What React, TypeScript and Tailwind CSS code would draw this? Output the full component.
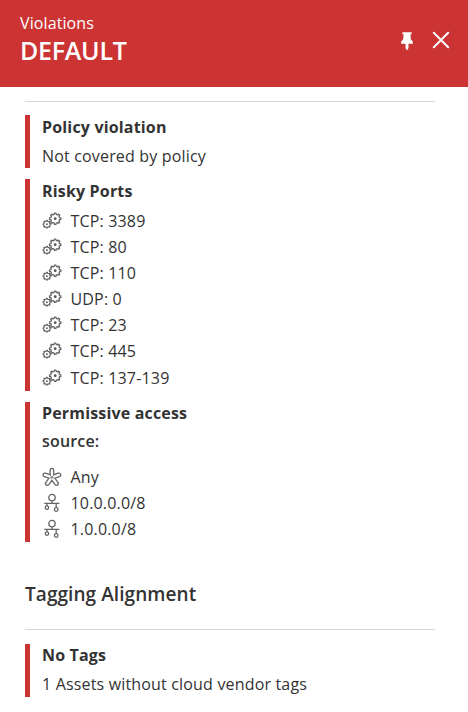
import type { ReactNode } from 'react';

function gearPath(cx: number, cy: number, outer: number, inner: number, teeth = 8) {
  const points: string[] = [];
  const step = (Math.PI * 2) / teeth;
  for (let i = 0; i < teeth; i++) {
    const a = i * step - Math.PI / 2;
    const corners: [number, number][] = [
      [inner, -0.3],
      [outer, -0.17],
      [outer, 0.17],
      [inner, 0.3],
    ];
    for (const [r, f] of corners) {
      points.push(`${(cx + r * Math.cos(a + f * step)).toFixed(2)} ${(cy + r * Math.sin(a + f * step)).toFixed(2)}`);
    }
  }
  return `M${points.join('L')}Z`;
}

function GearsIcon() {
  return (
    <svg viewBox="0 0 20 20" className="size-5 shrink-0" fill="none" stroke="#666" strokeWidth="1.3" strokeLinejoin="round">
      <path d={gearPath(13.2, 7.7, 5.7, 4.5)} />
      <circle cx="13.2" cy="7.7" r="1.4" fill="#555" stroke="none" />
      <path d={gearPath(4.9, 13.2, 3.9, 3)} strokeWidth="1.1" />
      <circle cx="4.9" cy="13.2" r="0.9" fill="#555" stroke="none" />
    </svg>
  );
}

function AnyIcon() {
  const arms = 'M9.9 10.3V3.2M9.9 10.3L2.9 7.9M9.9 10.3L16.9 7.9M9.9 10.3L5.3 16.5M9.9 10.3L14.5 16.5';
  return (
    <svg viewBox="0 0 20 20" className="size-5 shrink-0" strokeLinecap="round">
      <path d={arms} stroke="#666" strokeWidth="4.9" />
      <path d={arms} stroke="#fff" strokeWidth="2.3" />
      <path d="M9.9 10.3V12.4M9.9 10.3L11.6 8.2M9.9 10.3L8.2 8.2M9.9 10.3L7.6 11.1M9.9 10.3L12.2 11.1" stroke="#777" strokeWidth="0.8" />
    </svg>
  );
}

function NetworkIcon() {
  return (
    <svg viewBox="0 0 20 20" className="size-5 shrink-0" fill="none" stroke="#666" strokeWidth="1.3">
      <circle cx="10" cy="4.6" r="3.2" />
      <path d="M10 7.8V10.4M2.3 10.4H17.4M5 10.4V13M14.2 10.4V14.6" />
      <circle cx="5" cy="14.6" r="1.7" />
      <circle cx="14.2" cy="16.5" r="1.8" />
    </svg>
  );
}

function Row({ icon, children }: { icon: ReactNode; children: ReactNode }) {
  return (
    <li className="flex h-[26.08px] items-center gap-[8.5px]">
      {icon}
      <span>{children}</span>
    </li>
  );
}

function Section({ className, children }: { className: string; children: ReactNode }) {
  return <section className={`border-l-5 border-[#cc3333] pl-3 ${className}`}>{children}</section>;
}

const ports = ['TCP: 3389', 'TCP: 80', 'TCP: 110', 'UDP: 0', 'TCP: 23', 'TCP: 445', 'TCP: 137-139'];

export default function App() {
  return (
    <div className="h-[712px] w-[468px] overflow-hidden bg-white font-['Open_Sans','Noto_Sans',sans-serif] text-base leading-6 text-[#333]">
      <header className="flex h-[87px] items-start justify-between bg-[#cc3333] pr-[18px] pl-5 text-white">
        <div className="pt-3">
          <p className="leading-[22px] tracking-[0.1px]">Violations</p>
          <h1 className="text-[25px] leading-[33px] font-semibold tracking-[-0.25px]">DEFAULT</h1>
        </div>
        <div className="flex items-start gap-[18px] pt-[31px]">
          <button aria-label="Pin" className="pt-px">
            <svg viewBox="0 0 14 19" className="h-[19px] w-3.5" fill="#fff">
              <path d="M2.4 0.3H11.6V2.2H10.4L10.9 7.6C12.3 8.6 13 9.8 13 11.8H8.5V16L7 18.4L5.5 16V11.8H1C1 9.8 1.7 8.6 3.1 7.6L3.6 2.2H2.4Z" />
            </svg>
          </button>
          <button aria-label="Close">
            <svg viewBox="0 0 18 18" className="size-[18px]" stroke="#fff" strokeWidth="2" strokeLinecap="round">
              <path d="M1.8 1.8L16.2 16.2M16.2 1.8L1.8 16.2" />
            </svg>
          </button>
        </div>
      </header>
      <main className="pr-[33px] pl-[25px] tracking-[0.17px]">
        <hr className="mt-3.5 border-[#d8d8d8]" />
        <div className="flex flex-col gap-[11px] pt-[13px]">
          <Section className="h-[53px]">
            <h3 className="font-bold">Policy violation</h3>
            <p className="pt-[5px]">Not covered by policy</p>
          </Section>
          <Section className="h-[212px]">
            <h3 className="font-bold">Risky Ports</h3>
            <ul className="pt-[5px]">
              {ports.map((port) => (
                <Row key={port} icon={<GearsIcon />}>{port}</Row>
              ))}
            </ul>
          </Section>
          <Section className="h-[140px]">
            <h3 className="-mt-px pb-1 font-bold">Permissive access</h3>
            <h4 className="font-semibold">source:</h4>
            <ul className="pt-[11px]">
              <Row icon={<AnyIcon />}>Any</Row>
              <Row icon={<NetworkIcon />}>10.0.0.0/8</Row>
              <Row icon={<NetworkIcon />}>1.0.0.0/8</Row>
            </ul>
          </Section>
        </div>
        <h2 className="mt-[38px] text-[19px] leading-7 font-semibold tracking-[0.07px]">Tagging Alignment</h2>
        <hr className="mt-[21px] border-[#d8d8d8]" />
        <Section className="mt-3.5 h-[53px]">
          <h3 className="leading-[22px] font-bold">No Tags</h3>
          <p className="pt-1.5">1 Assets without cloud vendor tags</p>
        </Section>
      </main>
    </div>
  );
}
